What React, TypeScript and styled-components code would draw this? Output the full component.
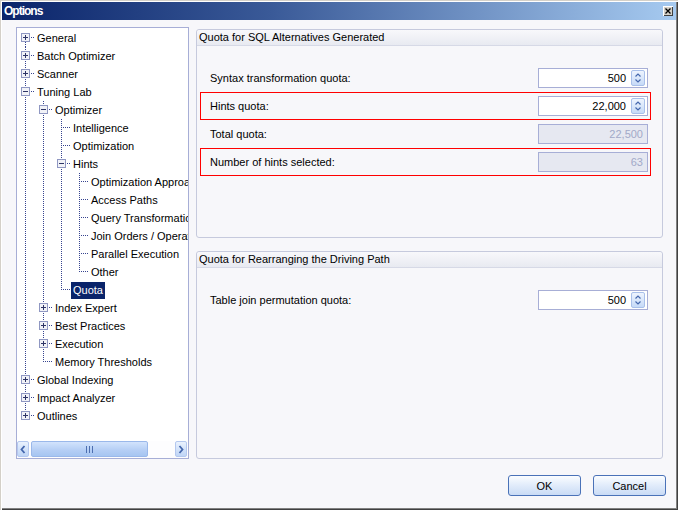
import React from 'react';
import styled, { createGlobalStyle } from 'styled-components';

interface INode {
  label: string;
  collapsed?: boolean;
  selected?: boolean;
  children?: INode[];
}

interface IRow {
  label: string;
  guides: boolean[];
  last: boolean;
  first: boolean;
  expander?: 'plus' | 'minus';
  selected?: boolean;
}

const treeData: INode[] = [
  { label: 'General', collapsed: true },
  { label: 'Batch Optimizer', collapsed: true },
  { label: 'Scanner', collapsed: true },
  {
    label: 'Tuning Lab',
    children: [
      {
        label: 'Optimizer',
        children: [
          { label: 'Intelligence' },
          { label: 'Optimization' },
          {
            label: 'Hints',
            children: [
              { label: 'Optimization Approach' },
              { label: 'Access Paths' },
              { label: 'Query Transformation' },
              { label: 'Join Orders / Operations' },
              { label: 'Parallel Execution' },
              { label: 'Other' },
            ],
          },
          { label: 'Quota', selected: true },
        ],
      },
      { label: 'Index Expert', collapsed: true },
      { label: 'Best Practices', collapsed: true },
      { label: 'Execution', collapsed: true },
      { label: 'Memory Thresholds' },
    ],
  },
  { label: 'Global Indexing', collapsed: true },
  { label: 'Impact Analyzer', collapsed: true },
  { label: 'Outlines', collapsed: true },
];

const flatten = (nodes: INode[], guides: boolean[], out: IRow[]) => {
  nodes.forEach((node, i) => {
    const last = i === nodes.length - 1;
    out.push({
      label: node.label,
      guides,
      last,
      first: guides.length === 0 && i === 0,
      expander: node.children ? 'minus' : node.collapsed ? 'plus' : undefined,
      selected: node.selected,
    });
    if (node.children) flatten(node.children, [...guides, !last], out);
  });
  return out;
};

const rows = flatten(treeData, [], []);

const LINE = '#36448f';

const GlobalStyle = createGlobalStyle`
  html, body {
    margin: 0;
    padding: 0;
    background: #f7f7fa;
  }
  body {
    font-family: 'Liberation Sans', Arial, sans-serif;
    font-size: 11px;
    color: #000;
  }
`;

const Window = styled.div`
  width: 678px;
  height: 510px;
  box-sizing: border-box;
  padding: 2px;
  display: flex;
  flex-direction: column;
  background: #f7f7fa;
  box-shadow: inset 1px 1px 0 #d4d0c8, inset 2px 2px 0 #ffffff,
    inset -1px -1px 0 #404040, inset -2px -2px 0 #808080;
`;

const TitleBar = styled.div`
  height: 18px;
  display: flex;
  align-items: center;
  justify-content: space-between;
  padding: 0 3px 0 2px;
  background: linear-gradient(to right, #0a246a 0%, #3a5a98 40%, #a6caf0 100%);
`;

const TitleText = styled.span`
  color: #fff;
  font-weight: bold;
  font-size: 12px;
  letter-spacing: -1px;
`;

const CloseButton = styled.span`
  width: 10px;
  height: 10px;
  display: flex;
  align-items: center;
  justify-content: center;
  background: #d4d0c8;
  box-shadow: inset 1px 1px 0 #fff, inset -1px -1px 0 #404040;
`;

const Body = styled.div`
  flex: 1;
  display: flex;
  flex-direction: column;
  padding: 7px 10px 0 14px;
`;

const Main = styled.div`
  height: 432px;
  display: flex;
  gap: 7px;
`;

const TreePanel = styled.div`
  width: 173px;
  box-sizing: border-box;
  border: 1px solid #a7aed6;
  background: #fff;
  display: flex;
  flex-direction: column;
`;

const TreeList = styled.div`
  flex: 1;
  overflow: hidden;
  padding-top: 1px;
`;

const TreeRow = styled.div`
  height: 18px;
  display: flex;
  align-items: center;
  white-space: nowrap;
`;

const Indent = styled.span`
  width: 18px;
  height: 18px;
  flex: none;
  display: block;

  svg {
    display: block;
  }
`;

const NodeLabel = styled.span<{ $selected?: boolean }>`
  padding: 0 2px;
  line-height: 17px;
  background: ${({ $selected }) => ($selected ? '#0a246a' : 'transparent')};
  color: ${({ $selected }) => ($selected ? '#fff' : '#000')};
`;

const HScroll = styled.div`
  height: 16px;
  display: flex;
  align-items: stretch;
  padding: 0 1px 1px 0;
  background: #fdfdfe;
`;

const ScrollArrow = styled.span`
  width: 12px;
  flex: none;
  box-sizing: border-box;
  border: 1px solid #b4c8ef;
  border-radius: 2px;
  background: linear-gradient(#eaf2fe, #bfd5f6);
  display: flex;
  align-items: center;
  justify-content: center;
`;

const ScrollThumb = styled.span`
  width: 117px;
  margin-left: 2px;
  box-sizing: border-box;
  border: 1px solid #9ab8ea;
  border-radius: 2px;
  background: linear-gradient(#d2e3fc, #b6cff5 55%, #a6c5f1);
  display: flex;
  align-items: center;
  justify-content: center;
`;

const ScrollTrack = styled.span`
  flex: 1;
`;

const RightColumn = styled.div`
  flex: 1;
  margin-right: 3px;
  padding-top: 2px;
  display: flex;
  flex-direction: column;
  gap: 13px;
`;

const Group = styled.section`
  flex: 1;
  border: 1px solid #c6cadd;
  border-radius: 3px;
  background: #f7f7fa;
  display: flex;
  flex-direction: column;
`;

const GroupHeader = styled.div`
  height: 15px;
  line-height: 15px;
  padding-left: 2px;
  border-bottom: 1px solid #d6d9e6;
  border-radius: 3px 3px 0 0;
  background: linear-gradient(#f8f8fb, #e8eaf1);
`;

const GroupBody = styled.div`
  padding: 18px 11px 0 3px;
  display: flex;
  flex-direction: column;
`;

const FieldRow = styled.div<{ $highlight?: boolean }>`
  height: 28px;
  box-sizing: border-box;
  border: 1px solid ${({ $highlight }) => ($highlight ? '#ff0000' : 'transparent')};
  padding: 0 2px 0 9px;
  display: flex;
  align-items: center;
  justify-content: space-between;
`;

const SpinBox = styled.div<{ $disabled?: boolean }>`
  width: 110px;
  height: 20px;
  box-sizing: border-box;
  border: 1px solid #a7aed6;
  background: ${({ $disabled }) => ($disabled ? '#e6e8f1' : '#fff')};
  color: ${({ $disabled }) => ($disabled ? '#a2a8c8' : '#000')};
  display: flex;
  align-items: center;
  justify-content: flex-end;
  gap: 5px;
  padding-right: ${({ $disabled }) => ($disabled ? '4px' : '2px')};
`;

const SpinButton = styled.span`
  width: 14px;
  height: 16px;
  box-sizing: border-box;
  border: 1px solid #a9c0ea;
  border-radius: 2px;
  background: linear-gradient(#eef4fe, #c6daf7);
  display: flex;
  align-items: center;
  justify-content: center;
`;

const Footer = styled.div`
  margin-top: 16px;
  display: flex;
  justify-content: flex-end;
  gap: 12px;
`;

const DialogButton = styled.button`
  width: 73px;
  height: 21px;
  box-sizing: border-box;
  border: 1px solid #4a72b8;
  border-radius: 3px;
  background: linear-gradient(#fbfdff, #e3edfb 45%, #c9dbf5);
  font-family: inherit;
  font-size: 11px;
  color: #000;
  padding: 0;
`;

const Connector: React.FC<{ row: IRow }> = ({ row }) => (
  <svg width="18" height="18" viewBox="0 0 18 18">
    <line x1="8.5" y1={row.first ? 9 : 0} x2="8.5" y2={row.last ? 9 : 18} stroke={LINE} strokeDasharray="1 1" />
    <line x1="10" y1="8.5" x2="18" y2="8.5" stroke={LINE} strokeDasharray="1 1" />
    {row.expander && (
      <g>
        <rect x="4.5" y="4.5" width="8" height="8" fill="#f1f2f7" stroke="#8f97c2" />
        <line x1="6" y1="8.5" x2="11" y2="8.5" stroke="#2d3466" />
        {row.expander === 'plus' && <line x1="8.5" y1="6" x2="8.5" y2="11" stroke="#2d3466" />}
      </g>
    )}
  </svg>
);

const Guide: React.FC<{ on: boolean }> = ({ on }) => (
  <Indent>
    {on && (
      <svg width="18" height="18" viewBox="0 0 18 18">
        <line x1="8.5" y1="0" x2="8.5" y2="18" stroke={LINE} strokeDasharray="1 1" />
      </svg>
    )}
  </Indent>
);

const Spinner: React.FC<{ value: string; disabled?: boolean }> = ({ value, disabled }) => (
  <SpinBox $disabled={disabled}>
    <span>{value}</span>
    {!disabled && (
      <SpinButton>
        <svg width="8" height="12" viewBox="0 0 8 12">
          <polyline points="1.5,4.5 4,2 6.5,4.5" fill="none" stroke="#4467ad" strokeWidth="1.2" />
          <polyline points="1.5,7.5 4,10 6.5,7.5" fill="none" stroke="#4467ad" strokeWidth="1.2" />
        </svg>
      </SpinButton>
    )}
  </SpinBox>
);

interface IField {
  label: string;
  value: string;
  disabled?: boolean;
  highlight?: boolean;
}

const sqlFields: IField[] = [
  { label: 'Syntax transformation quota:', value: '500' },
  { label: 'Hints quota:', value: '22,000', highlight: true },
  { label: 'Total quota:', value: '22,500', disabled: true },
  { label: 'Number of hints selected:', value: '63', disabled: true, highlight: true },
];

const pathFields: IField[] = [{ label: 'Table join permutation quota:', value: '500' }];

const Fields: React.FC<{ fields: IField[] }> = ({ fields }) => (
  <GroupBody>
    {fields.map((f) => (
      <FieldRow key={f.label} $highlight={f.highlight}>
        <span>{f.label}</span>
        <Spinner value={f.value} disabled={f.disabled} />
      </FieldRow>
    ))}
  </GroupBody>
);

export default function App() {
  return (
    <>
      <GlobalStyle />
      <Window>
        <TitleBar>
          <TitleText>Options</TitleText>
          <CloseButton>
            <svg width="6" height="6" viewBox="0 0 6 6">
              <path d="M0.5 0.5 L5.5 5.5 M5.5 0.5 L0.5 5.5" stroke="#000" strokeWidth="1.3" />
            </svg>
          </CloseButton>
        </TitleBar>
        <Body>
          <Main>
            <TreePanel>
              <TreeList>
                {rows.map((row) => (
                  <TreeRow key={row.label}>
                    {row.guides.map((g, i) => (
                      <Guide key={i} on={g} />
                    ))}
                    <Indent>
                      <Connector row={row} />
                    </Indent>
                    <NodeLabel $selected={row.selected}>{row.label}</NodeLabel>
                  </TreeRow>
                ))}
              </TreeList>
              <HScroll>
                <ScrollArrow>
                  <svg width="6" height="9" viewBox="0 0 6 9">
                    <polyline points="4.5,1 1.5,4.5 4.5,8" fill="none" stroke="#4467ad" strokeWidth="1.8" />
                  </svg>
                </ScrollArrow>
                <ScrollThumb>
                  <svg width="7" height="7" viewBox="0 0 7 7">
                    <path d="M0.5 0 V7 M3.5 0 V7 M6.5 0 V7" stroke="#4d6fb0" />
                  </svg>
                </ScrollThumb>
                <ScrollTrack />
                <ScrollArrow>
                  <svg width="6" height="9" viewBox="0 0 6 9">
                    <polyline points="1.5,1 4.5,4.5 1.5,8" fill="none" stroke="#4467ad" strokeWidth="1.8" />
                  </svg>
                </ScrollArrow>
              </HScroll>
            </TreePanel>
            <RightColumn>
              <Group>
                <GroupHeader>Quota for SQL Alternatives Generated</GroupHeader>
                <Fields fields={sqlFields} />
              </Group>
              <Group>
                <GroupHeader>Quota for Rearranging the Driving Path</GroupHeader>
                <Fields fields={pathFields} />
              </Group>
            </RightColumn>
          </Main>
          <Footer>
            <DialogButton>OK</DialogButton>
            <DialogButton>Cancel</DialogButton>
          </Footer>
        </Body>
      </Window>
    </>
  );
}
